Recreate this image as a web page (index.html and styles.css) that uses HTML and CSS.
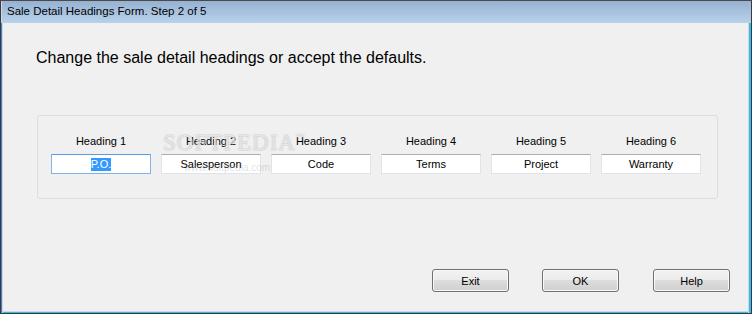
FILE: index.html
```html
<!DOCTYPE html>
<html>
<head>
<meta charset="utf-8">
<title>Sale Detail Headings Form</title>
<link rel="stylesheet" href="styles.css">
</head>
<body>
<div class="window">
  <div class="titlebar">Sale Detail Headings Form. Step 2 of 5</div>
  <div class="client">
    <p class="prompt">Change the sale detail headings or accept the defaults.</p>
    <div class="group">
      <div class="col">
        <div class="label">Heading 1</div>
        <div class="box focus"><span class="sel">P.O.</span></div>
      </div>
      <div class="col">
        <div class="label">Heading 2</div>
        <div class="box">Salesperson</div>
      </div>
      <div class="col">
        <div class="label">Heading 3</div>
        <div class="box">Code</div>
      </div>
      <div class="col">
        <div class="label">Heading 4</div>
        <div class="box">Terms</div>
      </div>
      <div class="col">
        <div class="label">Heading 5</div>
        <div class="box">Project</div>
      </div>
      <div class="col">
        <div class="label">Heading 6</div>
        <div class="box">Warranty</div>
      </div>
    </div>
    <div class="buttons">
      <button class="btn">Exit</button>
      <button class="btn">OK</button>
      <button class="btn help">Help</button>
    </div>
    <div class="watermark">SOFTPEDIA<sup>™</sup></div>
    <div class="watermark-url">www.softpedia.com</div>
  </div>
</div>
</body>
</html>
```
FILE: styles.css
```css
html, body {
  margin: 0;
  padding: 0;
  background: #f0f0f0;
}

.window {
  width: 752px;
  height: 314px;
  box-sizing: border-box;
  border: 1px solid #3a3a3a;
  border-top-color: #4a4a4a;
  display: flex;
  flex-direction: column;
  background: #f0f0f0;
  font-family: "Liberation Sans", Arial, sans-serif;
}

.titlebar {
  height: 22px;
  flex: none;
  box-sizing: border-box;
  padding-left: 6px;
  font-size: 11.5px;
  line-height: 21px;
  color: #000;
  background: linear-gradient(#96b2d2, #b9d1ea);
  box-shadow: inset 1px 0 0 #c9d9ea;
}

.client {
  position: relative;
  flex: 1;
  box-sizing: border-box;
  padding: 0 3px 2px 2px;
  box-shadow:
    inset 1px 0 0 #4c7dbe,
    inset 2px 0 0 #c6d9ee,
    inset -1px 0 0 #36b9e2,
    inset -2px 0 0 #36b9e2,
    inset -3px 0 0 #c6d9ee,
    inset 0 -1px 0 #36b9e2,
    inset 0 -2px 0 #c6d9ee;
}

.prompt {
  margin: 26px 0 0 33px;
  font-size: 16px;
  line-height: 18px;
  color: #000;
}

.group {
  margin: 48px 0 0 34px;
  width: 681px;
  height: 84px;
  box-sizing: border-box;
  border: 1px solid #d5dfe5;
  border-radius: 3px;
  padding: 19px 0 0 13px;
  display: flex;
  gap: 10px;
}

.col {
  width: 100px;
  display: flex;
  flex-direction: column;
  align-items: center;
}

.label {
  font-size: 11px;
  line-height: 13px;
  color: #000;
  text-align: center;
}

.box {
  margin-top: 6px;
  width: 100px;
  height: 20px;
  box-sizing: border-box;
  background: #fff;
  border: 1px solid #e2e3ea;
  border-top-color: #abadb3;
  font-size: 11px;
  line-height: 18px;
  text-align: center;
  color: #000;
}

.box.focus {
  border-color: #7eb4ea;
  border-top-color: #569de5;
}

.sel {
  display: inline-block;
  background: #3399ff;
  color: #fff;
  line-height: 13px;
  vertical-align: middle;
  margin-top: -2px;
}

.buttons {
  margin: 70px 0 0 429px;
  display: flex;
  gap: 33px;
}

.btn {
  width: 77px;
  height: 23px;
  margin: 0;
  padding: 0;
  box-sizing: border-box;
  border: 1px solid #707070;
  border-radius: 3px;
  background: linear-gradient(#f2f2f2 0%, #ebebeb 50%, #dddddd 50%, #cfcfcf 100%);
  box-shadow: inset 0 0 0 1px #fafafa;
  font-family: "Liberation Sans", Arial, sans-serif;
  font-size: 11px;
  color: #000;
  text-align: center;
}

.btn.help {
  margin-left: 1px;
}

.watermark {
  position: absolute;
  left: 162px;
  top: 107px;
  font-family: "Liberation Serif", "Times New Roman", serif;
  font-size: 23px;
  letter-spacing: 1px;
  color: rgba(255, 255, 255, 0.5);
  text-shadow:
    1px 0 0 rgba(170, 170, 170, 0.25),
    -1px 0 0 rgba(170, 170, 170, 0.25),
    0 1px 0 rgba(170, 170, 170, 0.25),
    0 -1px 0 rgba(170, 170, 170, 0.25);
  pointer-events: none;
}

.watermark sup {
  font-size: 9px;
  vertical-align: 10px;
}

.watermark-url {
  position: absolute;
  left: 183px;
  top: 139px;
  font-family: "Liberation Sans", Arial, sans-serif;
  font-size: 10px;
  color: rgba(150, 150, 150, 0.3);
  pointer-events: none;
}
```
